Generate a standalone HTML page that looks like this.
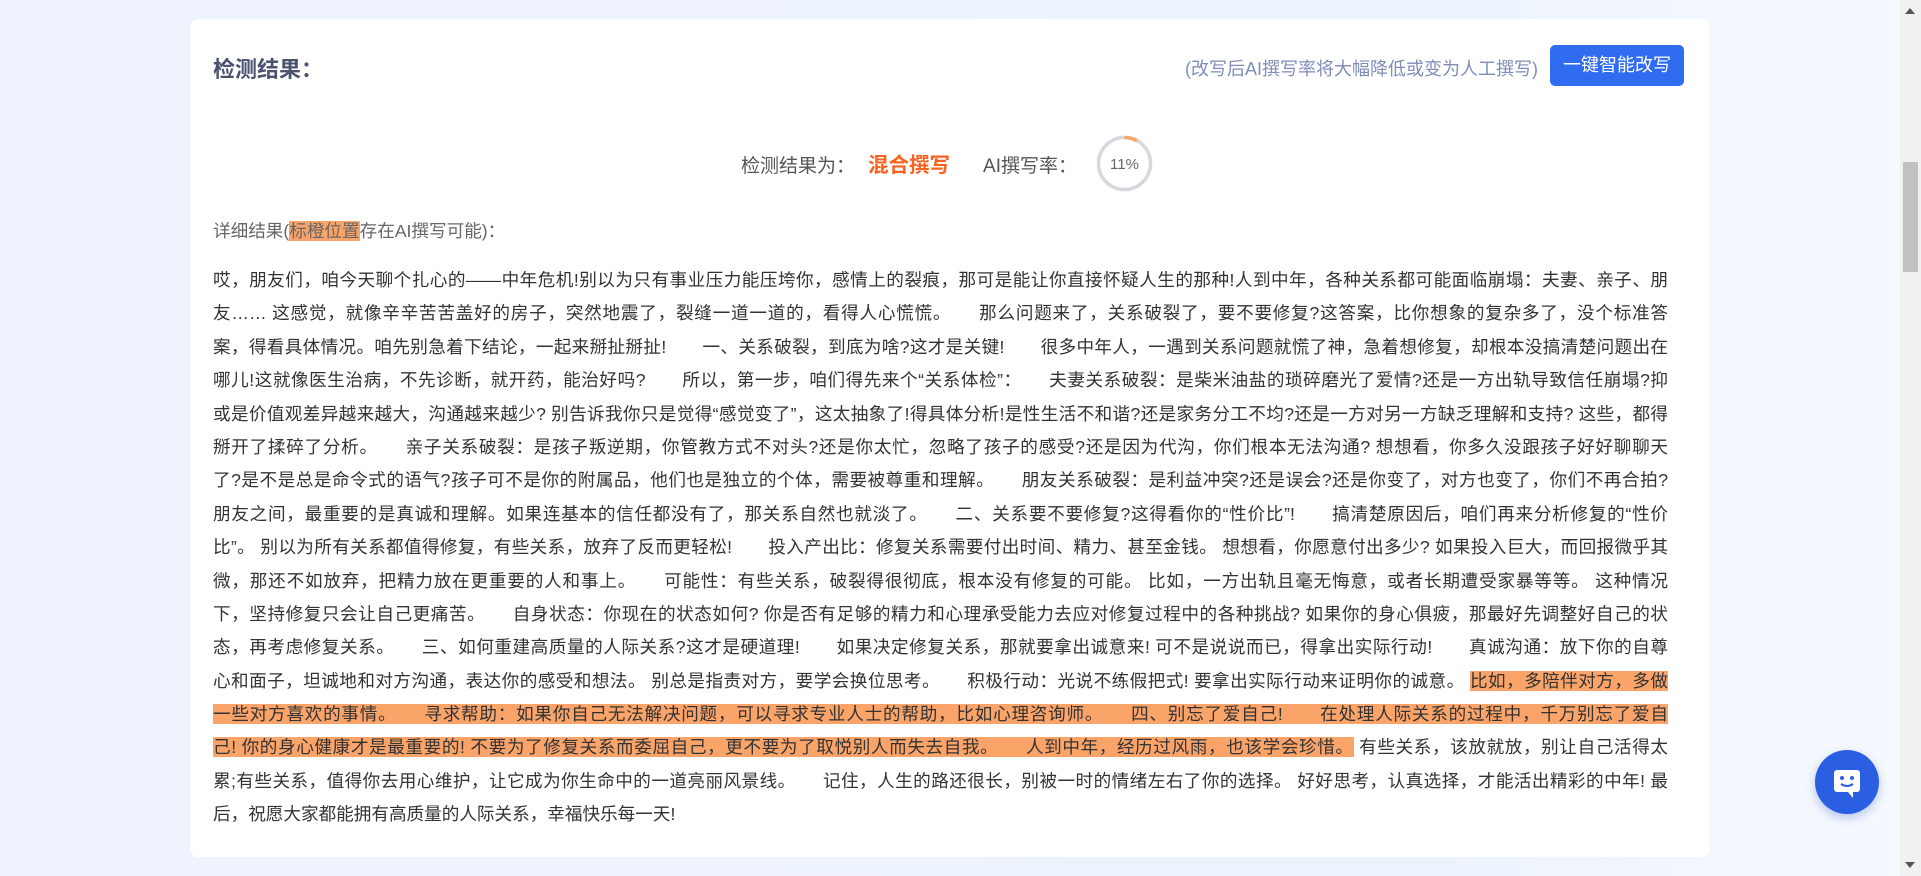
<!DOCTYPE html>
<html><head><meta charset="utf-8"><style>
*{margin:0;padding:0;box-sizing:border-box}
html,body{width:1921px;height:876px;overflow:hidden}
body{background:linear-gradient(90deg,#eef3fd 0%,#edf3fd 75%,#f6f9fe 100%);font-family:"Liberation Sans","Noto Sans CJK SC",sans-serif;position:relative}
.card{position:absolute;left:190px;top:19px;width:1520px;height:838px;background:#fff;border-radius:8px}
.title{position:absolute;left:23px;top:33px;font-size:22px;font-weight:bold;color:#4a5270}
.hint{position:absolute;left:995px;top:36px;font-size:18px;color:#7f8cba}
.btn{position:absolute;left:1360px;top:26px;width:134px;height:41px;background:#2f6cf0;border-radius:5px;color:#fff;font-size:18px;line-height:41px;text-align:center}
.res{position:absolute;left:551px;top:129px;font-size:19px;color:#555;white-space:nowrap}
.res b{color:#f8621e;font-size:20.5px;margin:0 33px 0 13px}
.ring{position:absolute;left:906px;top:116px;width:57px;height:57px}
.det{position:absolute;left:23px;top:199px;font-size:17.6px;color:#666}
.hl{background:#fba46a}
.txt{position:absolute;left:23px;top:245px;width:1455px;font-size:17.6px;color:#333;line-height:33.4px}
.txt div{white-space:nowrap;text-align:justify;text-align-last:justify;height:33.4px}
.txt div.l{text-align-last:left}
.sb{position:absolute;left:1900px;top:0;width:21px;height:876px;background:#f1f1f1}
.th{position:absolute;left:3px;top:162px;width:15px;height:110px;background:#c1c1c1}
.chat{position:absolute;left:1815px;top:750px;width:64px;height:64px;border-radius:50%;background:#2a5fe3;box-shadow:0 4px 10px rgba(40,80,200,.3)}
</style></head><body>
<div class="card">
<div class="title">检测结果：</div>
<div class="hint">(改写后AI撰写率将大幅降低或变为人工撰写)</div>
<div class="btn">一键智能改写</div>
<div class="res">检测结果为：<b>混合撰写</b>AI撰写率：</div>
<svg class="ring" viewBox="0 0 57 57"><circle cx="28.5" cy="28.5" r="26" fill="none" stroke="#d6d8de" stroke-width="3.5"/><path d="M28.5 2.5 A26 26 0 0 1 41 5.8" fill="none" stroke="#f9a46c" stroke-width="3.5"/><text x="28.5" y="34" text-anchor="middle" font-size="15" fill="#666" font-family="Liberation Sans">11%</text></svg>
<div class="det">详细结果(<span class="hl">标橙位置</span>存在AI撰写可能)：</div>
<div class="txt">
<div>哎，朋友们，咱今天聊个扎心的——中年危机!别以为只有事业压力能压垮你，感情上的裂痕，那可是能让你直接怀疑人生的那种!人到中年，各种关系都可能面临崩塌：夫妻、亲子、朋</div>
<div>友…… 这感觉，就像辛辛苦苦盖好的房子，突然地震了，裂缝一道一道的，看得人心慌慌。　　那么问题来了，关系破裂了，要不要修复?这答案，比你想象的复杂多了，没个标准答</div>
<div>案，得看具体情况。咱先别急着下结论，一起来掰扯掰扯!　　一、关系破裂，到底为啥?这才是关键!　　很多中年人，一遇到关系问题就慌了神，急着想修复，却根本没搞清楚问题出在</div>
<div>哪儿!这就像医生治病，不先诊断，就开药，能治好吗?　　所以，第一步，咱们得先来个“关系体检”：　　夫妻关系破裂：是柴米油盐的琐碎磨光了爱情?还是一方出轨导致信任崩塌?抑</div>
<div>或是价值观差异越来越大，沟通越来越少? 别告诉我你只是觉得“感觉变了”，这太抽象了!得具体分析!是性生活不和谐?还是家务分工不均?还是一方对另一方缺乏理解和支持? 这些，都得</div>
<div>掰开了揉碎了分析。　　亲子关系破裂：是孩子叛逆期，你管教方式不对头?还是你太忙，忽略了孩子的感受?还是因为代沟，你们根本无法沟通? 想想看，你多久没跟孩子好好聊聊天</div>
<div>了?是不是总是命令式的语气?孩子可不是你的附属品，他们也是独立的个体，需要被尊重和理解。　　朋友关系破裂：是利益冲突?还是误会?还是你变了，对方也变了，你们不再合拍?</div>
<div>朋友之间，最重要的是真诚和理解。如果连基本的信任都没有了，那关系自然也就淡了。　　二、关系要不要修复?这得看你的“性价比”!　　搞清楚原因后，咱们再来分析修复的“性价</div>
<div>比”。 别以为所有关系都值得修复，有些关系，放弃了反而更轻松!　　投入产出比：修复关系需要付出时间、精力、甚至金钱。 想想看，你愿意付出多少? 如果投入巨大，而回报微乎其</div>
<div>微，那还不如放弃，把精力放在更重要的人和事上。　　可能性：有些关系，破裂得很彻底，根本没有修复的可能。 比如，一方出轨且毫无悔意，或者长期遭受家暴等等。 这种情况</div>
<div>下，坚持修复只会让自己更痛苦。　　自身状态：你现在的状态如何? 你是否有足够的精力和心理承受能力去应对修复过程中的各种挑战? 如果你的身心俱疲，那最好先调整好自己的状</div>
<div>态，再考虑修复关系。　　三、如何重建高质量的人际关系?这才是硬道理!　　如果决定修复关系，那就要拿出诚意来! 可不是说说而已，得拿出实际行动!　　真诚沟通：放下你的自尊</div>
<div>心和面子，坦诚地和对方沟通，表达你的感受和想法。 别总是指责对方，要学会换位思考。　　积极行动：光说不练假把式! 要拿出实际行动来证明你的诚意。 <span class="hl">比如，多陪伴对方，多做</span></div>
<div><span class="hl">一些对方喜欢的事情。　　寻求帮助：如果你自己无法解决问题，可以寻求专业人士的帮助，比如心理咨询师。　　四、别忘了爱自己!　　在处理人际关系的过程中，千万别忘了爱自</span></div>
<div><span class="hl">己! 你的身心健康才是最重要的! 不要为了修复关系而委屈自己，更不要为了取悦别人而失去自我。　　人到中年，经历过风雨，也该学会珍惜。</span> 有些关系，该放就放，别让自己活得太</div>
<div>累;有些关系，值得你去用心维护，让它成为你生命中的一道亮丽风景线。　　记住，人生的路还很长，别被一时的情绪左右了你的选择。 好好思考，认真选择，才能活出精彩的中年! 最</div>
<div class="l">后，祝愿大家都能拥有高质量的人际关系，幸福快乐每一天!</div>
</div>
</div>
<div class="chat"><svg width="64" height="64" viewBox="0 0 64 64"><path d="M22 20h20a3 3 0 0 1 3 3v16a3 3 0 0 1-3 3h-4v6l-5-6H22a3 3 0 0 1-3-3V23a3 3 0 0 1 3-3z" fill="#fff"/><circle cx="27" cy="28" r="2" fill="#2a5fe3"/><circle cx="37" cy="28" r="2" fill="#2a5fe3"/><path d="M26 34q6 4 12 0" stroke="#2a5fe3" stroke-width="2" fill="none"/></svg></div>
<div class="sb"><div class="th"></div><div style="position:absolute;left:5px;top:8px;border:5px solid transparent;border-bottom:6px solid #555;border-top:0"></div><div style="position:absolute;left:5px;bottom:8px;border:5px solid transparent;border-top:6px solid #555;border-bottom:0"></div></div>
</body></html>
